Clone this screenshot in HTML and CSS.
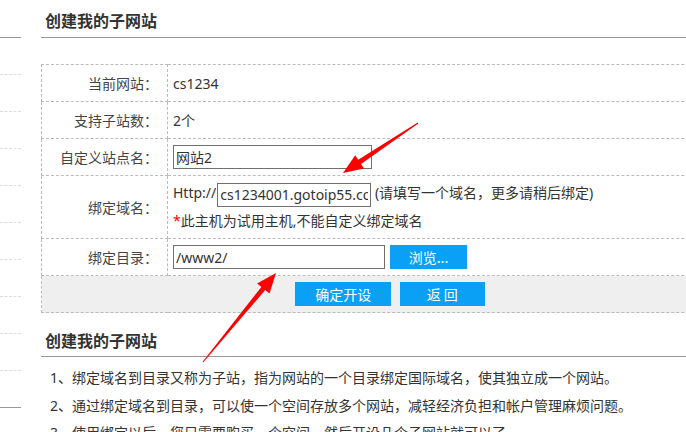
FILE: index.html
```html
<!DOCTYPE html>
<html lang="zh-CN">
<head>
    <meta charset="UTF-8">
    <title>创建我的子网站</title>
    <link rel="stylesheet" href="styles.css">
</head>
<body>
    <div class="page">
        <!-- 左侧菜单 -->
        <div class="sidebar">
            <div class="side-head"></div>
            <div class="side-item"></div>
            <div class="side-item"></div>
            <div class="side-item"></div>
            <div class="side-item"></div>
            <div class="side-item"></div>
            <div class="side-item"></div>
            <div class="side-item"></div>
            <div class="side-item"></div>
            <div class="side-item"></div>
            <div class="side-item side-last"></div>
        </div>

        <div class="main">
            <h2 class="title">创建我的子网站</h2>

            <table class="form-table">
                <tr>
                    <td class="label">当前网站：</td>
                    <td class="value">cs1234</td>
                </tr>
                <tr>
                    <td class="label">支持子站数：</td>
                    <td class="value">2个</td>
                </tr>
                <tr>
                    <td class="label">自定义站点名：</td>
                    <td class="value"><input type="text" class="txt txt-name" value="网站2"></td>
                </tr>
                <tr class="row-domain">
                    <td class="label">绑定域名：</td>
                    <td class="value">
                        <div class="domain-line">Http://<input type="text" class="txt txt-domain" value="cs1234001.gotoip55.com"> (请填写一个域名<span class="punct">，</span>更多请稍后绑定)</div>
                        <div class="note"><span class="star">*</span>此主机为试用主机,不能自定义绑定域名</div>
                    </td>
                </tr>
                <tr>
                    <td class="label">绑定目录：</td>
                    <td class="value"><input type="text" class="txt txt-dir" value="/www2/"><button class="btn btn-browse">浏览...</button></td>
                </tr>
                <tr class="row-actions">
                    <td colspan="2">
                        <button class="btn btn-ok">确定开设</button>
                        <button class="btn btn-back">返 回</button>
                    </td>
                </tr>
            </table>

            <h2 class="title title-help">创建我的子网站</h2>
            <ul class="help">
                <li>1、绑定域名到目录又称为子站<span class="punct">，</span>指为网站的一个目录绑定国际域名<span class="punct">，</span>使其独立成一个网站。</li>
                <li>2、通过绑定域名到目录<span class="punct">，</span>可以使一个空间存放多个网站<span class="punct">，</span>减轻经济负担和帐户管理麻烦问题。</li>
                <li>3、使用绑定以后<span class="punct">，</span>您只需要购买一个空间<span class="punct">，</span>然后开设几个子网站就可以了。</li>
            </ul>
        </div>
    </div>

    <!-- 红色箭头标注 -->
    <svg class="marks" width="686" height="432" viewBox="0 0 686 432">
        <polygon fill="#f00" points="417.7,122.6 358.2,159.8 355.2,155.2 343,173 364,168.6 361,164 418.3,123.4"/>
        <polygon fill="#f00" points="202.6,361.7 261.4,286.9 257.1,283.4 276,273 269.5,293.6 265.2,290.1 203.4,362.3"/>
    </svg>
</body>
</html>
```

FILE: styles.css
```css
body {
    margin: 0;
    width: 686px;
    height: 432px;
    overflow: hidden;
    position: relative;
    font-family: "Noto Sans", "Noto Sans CJK SC", sans-serif;
    font-size: 14px;
    color: #333;
    background: #fff;
}
.page {
    display: flex;
    gap: 20px;
}
.sidebar {
    width: 21px;
    flex: none;
}
.side-head {
    height: 37px;
    border-bottom: 1px solid #999;
}
.side-item {
    height: 36px;
    border-bottom: 1px dashed #ddd;
}
.side-last {
    border-bottom: 1px solid #999;
}
.main {
    width: 698px;
    flex: none;
}
.title {
    margin: 0;
    height: 37px;
    line-height: 40px;
    padding-left: 4px;
    font-size: 16px;
    font-weight: bold;
    color: #333;
    border-bottom: 1px solid #999;
    font-family: "Noto Sans CJK SC", sans-serif;
}
.form-table {
    width: 100%;
    margin-top: 26px;
    border-collapse: collapse;
    border: 1px dashed #bbb;
}
.form-table td {
    border: 1px dashed #bbb;
    height: 36px;
    padding: 0;
}
.label {
    width: 116px;
    text-align: right;
    padding-right: 9px !important;
    color: #444;
    font-family: "Noto Sans CJK TC", sans-serif;
}
.value {
    padding-left: 5px !important;
}
.punct {
    font-family: "Noto Sans CJK TC", sans-serif;
}
.row-domain td {
    height: 62px;
}
.domain-line {
    line-height: 26px;
}
.note {
    line-height: 28px;
}
.star {
    color: #f00;
}
.txt {
    box-sizing: border-box;
    height: 24px;
    border: 1px solid #707070;
    padding: 0 2px;
    font-family: inherit;
    font-size: 14px;
    color: #333;
    vertical-align: middle;
    margin: 0;
}
.txt-name {
    width: 199px;
}
.txt-domain {
    width: 154px;
    margin-left: 1px;
}
.txt-dir {
    width: 212px;
}
.btn {
    box-sizing: border-box;
    height: 24px;
    border: none;
    background: #0aa0f5;
    color: #fff;
    font-family: "Noto Sans CJK SC", sans-serif;
    font-size: 14px;
    cursor: pointer;
    vertical-align: middle;
    padding: 0;
}
.btn-browse {
    width: 77px;
    margin-left: 5px;
}
.row-actions td {
    background: #efefef;
    text-align: center;
}
.btn-ok {
    width: 96px;
}
.btn-back {
    width: 85px;
    margin-left: 5px;
}
.title-help {
    margin-top: 7px;
    height: 36px;
}
.help {
    list-style: none;
    margin: 7px 0 0;
    padding-left: 9px;
    line-height: 27.5px;
    color: #333;
}
.marks {
    position: absolute;
    left: 0;
    top: 0;
    pointer-events: none;
}
```
